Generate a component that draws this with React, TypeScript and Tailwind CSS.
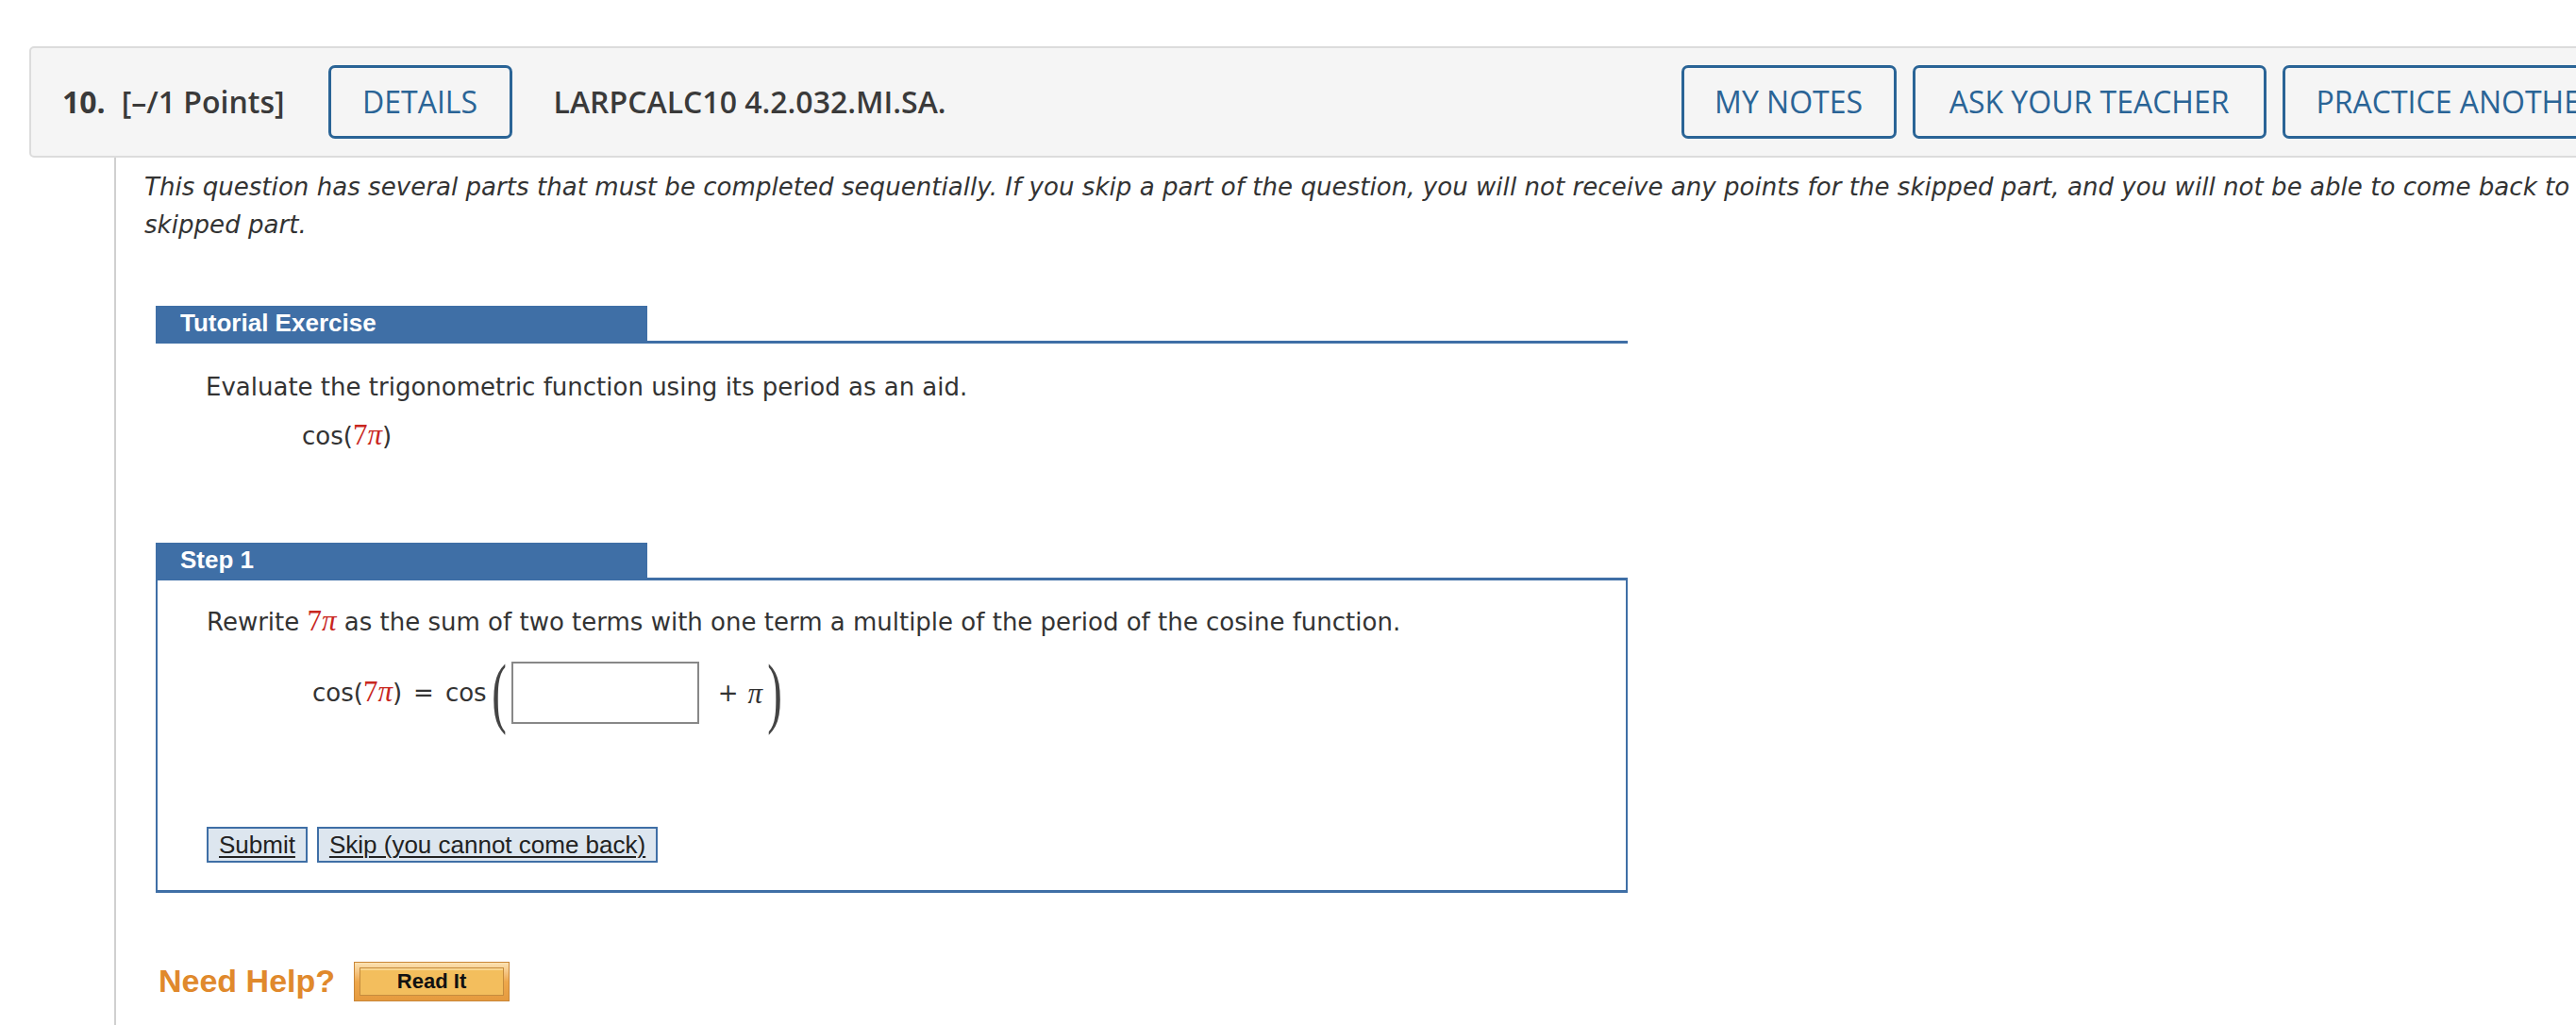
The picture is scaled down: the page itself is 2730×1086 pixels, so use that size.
import React from "react";

const BLUE = "border-[#2a6496] text-[#2a6496]";

function HeaderBtn({ children, className = "" }: { children: React.ReactNode; className?: string }) {
  return (
    <button
      className={[
        "h-[78px] shrink-0 rounded-[7px] border-[3px] text-[32px] leading-none whitespace-nowrap",
        BLUE,
        className,
      ].join(" ")}
    >
      {children}
    </button>
  );
}

function SectionBar({ title }: { title: string }) {
  return (
    <div className="flex w-[1560px] border-b-[3px] border-[#3f6fa6]">
      <div className="flex h-[37px] w-[521px] items-center bg-[#3f6fa6] pl-[26px] font-['Liberation_Sans',Arial,sans-serif] text-[26px] font-bold text-white">
        {title}
      </div>
    </div>
  );
}

function Pi() {
  return <span className="font-['Liberation_Serif',serif] text-[31px] italic leading-none text-[#333]">π</span>;
}

function SevenPi() {
  return (
    <span className="font-['Liberation_Serif',serif] text-[31px] leading-none text-[#c8261e]">
      7<span className="italic">π</span>
    </span>
  );
}

function BigParen({ right = false }: { right?: boolean }) {
  return (
    <span className="inline-block origin-center scale-x-[0.6] scale-y-[1.05] font-['Liberation_Serif',serif] text-[78px] leading-none font-light text-[#444]">
      {right ? ")" : "("}
    </span>
  );
}

function SmallBtn({ children }: { children: React.ReactNode }) {
  return (
    <button className="h-[38px] border-2 border-[#3f6fa6] bg-[#dde6ef] px-[11px] font-['Liberation_Sans',Arial,sans-serif] text-[26px] leading-none text-[#222] underline decoration-2 underline-offset-[3px]">
      {children}
    </button>
  );
}

export default function App() {
  return (
    <div className="h-[1086px] w-[2730px] overflow-hidden bg-white text-[#333]">
      {/* question header */}
      <div className="pl-[31px] pt-[49px]">
        <div className="flex h-[118px] w-[2900px] items-center whitespace-nowrap rounded-l-[5px] border-2 border-[#dcdcdc] bg-[#f5f5f5] pl-[33px] font-['Open_Sans',sans-serif] text-[32px] text-[#3a3a3a]">
          <span className="shrink-0 font-bold">10.</span>
          <span className="ml-[17px] shrink-0 font-semibold">[–/1 Points]</span>
          <HeaderBtn className="ml-[46px] w-[195px]">DETAILS</HeaderBtn>
          <span className="ml-[44px] w-[430px] shrink-0 font-semibold">LARPCALC10 4.2.032.MI.SA.</span>
          <div className="ml-[765px] flex shrink-0 gap-[17px]">
            <HeaderBtn className="w-[228px]">MY NOTES</HeaderBtn>
            <HeaderBtn className="w-[375px]">ASK YOUR TEACHER</HeaderBtn>
            <HeaderBtn className="w-[400px] pl-[33px] text-left">PRACTICE ANOTHER</HeaderBtn>
          </div>
        </div>
      </div>

      {/* question body */}
      <div className="ml-[121px] h-[919px] border-l-2 border-[#d0d0d0] font-['DejaVu_Sans',Verdana,sans-serif] text-[26px]">
        <p className="whitespace-nowrap pl-[30px] pt-[11px] italic leading-[40px] tracking-[0.05px]">
          This question has several parts that must be completed sequentially. If you skip a part of the question, you will not receive any points for the skipped part, and you will not be able to come back to the
          <br />
          skipped part.
        </p>

        <div className="ml-[42px] mt-[66px]">
          <SectionBar title="Tutorial Exercise" />
          <p className="ml-[53px] mt-[26px] leading-[40px]">Evaluate the trigonometric function using its period as an aid.</p>
          <p className="ml-[155px] mt-[12px] leading-[40px]">
            cos(<SevenPi />)
          </p>

          <div className="mt-[93px]">
            <SectionBar title="Step 1" />
            <div className="flex h-[331px] w-[1560px] flex-col border-x-2 border-b-[3px] border-[#3f6fa6] pt-[24px]">
              <p className="ml-[52px] leading-[40px]">
                Rewrite <SevenPi /> as the sum of two terms with one term a multiple of the period of the cosine function.
              </p>
              <div className="ml-[164px] mt-[16px] flex items-center">
                <span>
                  cos(<SevenPi />)
                </span>
                <span className="mx-[12px]">=</span>
                <span>cos</span>
                <BigParen />
                <input className="h-[66px] w-[199px] border-2 border-[#888] bg-white outline-none" />
                <span className="ml-[20px] mr-[10px]">+</span>
                <Pi />
                <BigParen right />
              </div>
              <div className="ml-[52px] mt-[103px] flex gap-[10px]">
                <SmallBtn>Submit</SmallBtn>
                <SmallBtn>Skip (you cannot come back)</SmallBtn>
              </div>
            </div>
          </div>

          <div className="mt-[68px] flex items-center gap-[20px] pl-[3px]">
            <span className="font-['Liberation_Sans',Arial,sans-serif] text-[34px] font-bold text-[#e0892c]">Need Help?</span>
            <button className="h-[42px] w-[165px] border border-[#c98637] bg-gradient-to-b from-[#fbe2b2] via-[#eea84c] to-[#e59a3e] p-[5px]">
              <div className="flex h-full w-full items-center justify-center border border-[#c58c3d] bg-[#f3be5d] shadow-[inset_0_2px_0_#f9d690]">
                <span className="font-['Liberation_Sans',Arial,sans-serif] text-[22px] font-bold leading-none text-[#111]">Read It</span>
              </div>
            </button>
          </div>
        </div>
      </div>
    </div>
  );
}
